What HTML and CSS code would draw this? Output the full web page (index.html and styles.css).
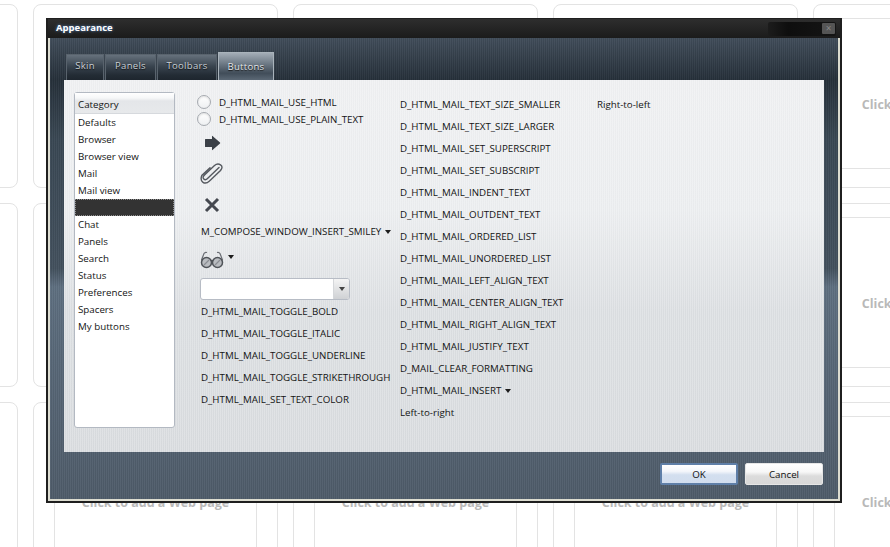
FILE: index.html
```html
<!DOCTYPE html>
<html lang="en">
<head>
<meta charset="utf-8">
<title>Appearance</title>
<link rel="stylesheet" href="styles.css">
</head>
<body>
<div class="dial">
  <div class="tile"><div class="thumb"></div></div>
  <div class="tile"><div class="thumb"><span>Click to add a Web page</span></div></div>
  <div class="tile"><div class="thumb"><span>Click to add a Web page</span></div></div>
  <div class="tile"><div class="thumb"><span>Click to add a Web page</span></div></div>
  <div class="tile"><div class="thumb"><span>Click to add a Web page</span></div></div>
  <div class="tile"><div class="thumb"></div></div>
  <div class="tile"><div class="thumb"><span>Click to add a Web page</span></div></div>
  <div class="tile"><div class="thumb"><span>Click to add a Web page</span></div></div>
  <div class="tile"><div class="thumb"><span>Click to add a Web page</span></div></div>
  <div class="tile"><div class="thumb"><span>Click to add a Web page</span></div></div>
  <div class="tile"><div class="thumb"></div></div>
  <div class="tile"><div class="thumb"><span>Click to add a Web page</span></div></div>
  <div class="tile"><div class="thumb"><span>Click to add a Web page</span></div></div>
  <div class="tile"><div class="thumb"><span>Click to add a Web page</span></div></div>
  <div class="tile"><div class="thumb"><span>Click to add a Web page</span></div></div>
</div>

<div class="dialog">
  <div class="titlebar">
    <span class="title">Appearance</span>
    <div class="winctl"><span class="close">×</span></div>
  </div>
  <div class="body">
    <div class="tabs">
      <div class="tab tab-skin">Skin</div>
      <div class="tab tab-panels">Panels</div>
      <div class="tab tab-toolbars">Toolbars</div>
      <div class="tab tab-buttons">Buttons</div>
    </div>
    <div class="panel">
      <div class="list">
        <div class="list-head">Category</div>
        <div class="item">Defaults</div>
        <div class="item">Browser</div>
        <div class="item">Browser view</div>
        <div class="item">Mail</div>
        <div class="item">Mail view</div>
        <div class="item selected"></div>
        <div class="item">Chat</div>
        <div class="item">Panels</div>
        <div class="item">Search</div>
        <div class="item">Status</div>
        <div class="item">Preferences</div>
        <div class="item">Spacers</div>
        <div class="item">My buttons</div>
      </div>

      <div class="col col-a">
        <div class="radio-row"><span class="radio"></span>D_HTML_MAIL_USE_HTML</div>
        <div class="radio-row"><span class="radio"></span>D_HTML_MAIL_USE_PLAIN_TEXT</div>
        <div class="icon-row icon-arrow">
          <svg width="18" height="16" viewBox="0 0 18 16"><path d="M1 4.500Q1 4 1.500 4H8V1.200Q8 .6 8.500 1L16 7.500Q16.500 8 16 8.500L8.500 15Q8 15.400 8 14.800V12H1.500Q1 12 1 11.500Z" fill="#3b4047"/></svg>
        </div>
        <div class="icon-row icon-clip">
          <svg width="24" height="22" viewBox="0 0 24 22"><path d="M19 4.500 7.500 15.500Q5.500 17.500 3.800 16T4.500 12L14.500 2.500Q17.500 0 20.500 1.800T20.500 7.500L9.500 18Q6 21.300 3 19.300T1.800 12.500L10 4.800" fill="none" stroke="#55595f" stroke-width="1.400" stroke-linecap="round"/></svg>
        </div>
        <div class="icon-row icon-x">
          <svg width="16" height="16" viewBox="0 0 16 16"><path d="M2 2 14 14M14 2 2 14" stroke="#44484f" stroke-width="3"/></svg>
        </div>
        <div class="text-row">M_COMPOSE_WINDOW_INSERT_SMILEY<span class="caret"></span></div>
        <div class="icon-row icon-glasses">
          <svg width="24" height="18" viewBox="0 0 24 18"><path d="M1.500 9 4 2.500Q5 .8 7 1.500M22.500 9 20 2.500Q19 .8 17 1.500" fill="none" stroke="#6a6e74" stroke-width="1.200"/><circle cx="6.500" cy="11.500" r="5" fill="#b9bcc0" stroke="#4f5358" stroke-width="1.500"/><circle cx="17.500" cy="11.500" r="5" fill="#b9bcc0" stroke="#4f5358" stroke-width="1.500"/><path d="M4 14 9 9M15 14 20 9" stroke="#8a8d92" stroke-width="1.200"/><path d="M11 10Q12 9 13 10" fill="none" stroke="#4f5358" stroke-width="1.300"/></svg>
          <span class="caret caret-up"></span>
        </div>
        <div class="select"><span class="select-value"></span><span class="select-btn"><span class="caret caret-flat"></span></span></div>
        <div class="text-row">D_HTML_MAIL_TOGGLE_BOLD</div>
        <div class="text-row">D_HTML_MAIL_TOGGLE_ITALIC</div>
        <div class="text-row">D_HTML_MAIL_TOGGLE_UNDERLINE</div>
        <div class="text-row">D_HTML_MAIL_TOGGLE_STRIKETHROUGH</div>
        <div class="text-row">D_HTML_MAIL_SET_TEXT_COLOR</div>
      </div>

      <div class="col col-b">
        <div class="text-row">D_HTML_MAIL_TEXT_SIZE_SMALLER</div>
        <div class="text-row">D_HTML_MAIL_TEXT_SIZE_LARGER</div>
        <div class="text-row">D_HTML_MAIL_SET_SUPERSCRIPT</div>
        <div class="text-row">D_HTML_MAIL_SET_SUBSCRIPT</div>
        <div class="text-row">D_HTML_MAIL_INDENT_TEXT</div>
        <div class="text-row">D_HTML_MAIL_OUTDENT_TEXT</div>
        <div class="text-row">D_HTML_MAIL_ORDERED_LIST</div>
        <div class="text-row">D_HTML_MAIL_UNORDERED_LIST</div>
        <div class="text-row">D_HTML_MAIL_LEFT_ALIGN_TEXT</div>
        <div class="text-row">D_HTML_MAIL_CENTER_ALIGN_TEXT</div>
        <div class="text-row">D_HTML_MAIL_RIGHT_ALIGN_TEXT</div>
        <div class="text-row">D_HTML_MAIL_JUSTIFY_TEXT</div>
        <div class="text-row">D_MAIL_CLEAR_FORMATTING</div>
        <div class="text-row">D_HTML_MAIL_INSERT<span class="caret"></span></div>
        <div class="text-row">Left-to-right</div>
      </div>

      <div class="col col-c">
        <div class="text-row">Right-to-left</div>
      </div>
    </div>
    <div class="actions">
      <button class="btn btn-ok" type="button">OK</button>
      <button class="btn btn-cancel" type="button">Cancel</button>
    </div>
  </div>
</div>
</body>
</html>
```

FILE: styles.css
```css
* { box-sizing: border-box; }

html, body {
  margin: 0;
  height: 100%;
  overflow: hidden;
  background: #fff;
}

body {
  font-family: "Open Sans", "Liberation Sans", sans-serif;
  font-size: 9.75px;
  color: #141414;
}

/* Speed dial behind the dialog */
.dial {
  display: grid;
  grid-template-columns: repeat(5, 245px);
  grid-auto-rows: 184px;
  gap: 15px;
  margin-left: -227px;
  padding-top: 4px;
  width: 1300px;
}

.tile {
  border: 1px solid #e3e3e3;
  border-radius: 8px;
  padding: 13px 20px 0;
}

.thumb {
  height: 151px;
  border: 1px solid #e3e3e3;
  padding-top: 22px;
  display: flex;
  align-items: center;
  justify-content: center;
}

.thumb span {
  font-size: 12.5px;
  font-weight: 700;
  color: #b9b9b9;
  white-space: nowrap;
}

/* Dialog */
.dialog {
  position: absolute;
  left: 46px;
  top: 18px;
  width: 796px;
  height: 485px;
  display: flex;
  flex-direction: column;
  border: 2px solid #1f1f1f;
  border-top-width: 1px;
  background: #dcdcd0;
  padding: 0 2px 2px;
}

.titlebar {
  flex: none;
  height: 19px;
  margin: 0 -2px;
  padding: 0 4px 2px 8px;
  display: flex;
  align-items: center;
  justify-content: space-between;
  background: linear-gradient(#2e2e2e, #1b1b1b);
}

.title {
  color: #fff;
  font-weight: 700;
  font-size: 9.5px;
  text-shadow: 0 0 3px #5b8fd0;
}

.winctl {
  width: 68px;
  height: 14px;
  margin-top: 2px;
  display: flex;
  justify-content: flex-end;
  background: linear-gradient(90deg, #1c1c1c, #0e0e0e 30%, #151515);
  border-radius: 2px;
}

.close {
  width: 13px;
  height: 11px;
  margin: 1px 1px 0 0;
  border-radius: 1px;
  background: #555;
  color: #888;
  font-size: 10px;
  line-height: 10px;
  text-align: center;
}

.body {
  flex: 1;
  display: flex;
  flex-direction: column;
  min-height: 0;
  padding: 0 14px;
  background:
    repeating-linear-gradient(90deg, rgba(255,255,255,.035) 0 1px, rgba(0,0,0,.05) 1px 2px),
    linear-gradient(#414d5a 0, #26303a 9%, #3a4854 22%, #43515e 50%, #5f7081 54%, #586878 70%, #4f5c6a 100%);
}

/* Tabs */
.tabs {
  flex: none;
  display: flex;
  align-items: flex-end;
  height: 42px;
  padding-left: 2px;
}

.tab {
  height: 26px;
  display: flex;
  align-items: center;
  justify-content: center;
  padding-bottom: 5px;
  color: #c9d0d6;
  font-size: 9.5px;
  letter-spacing: .3px;
  text-shadow: 0 1px 1px #111;
  background: linear-gradient(#66717c 0, #39444f 45%, #232c35 80%, #1e262e);
  border: 1px solid #59636d;
  border-bottom: 0;
  margin-right: 1px;
}

.tab-skin { width: 38px; }
.tab-panels { width: 51px; }
.tab-toolbars { width: 60px; }

.tab-buttons {
  width: 56px;
  height: 28px;
  padding-bottom: 1px;
  color: #e3e7ea;
  background: linear-gradient(#a3adb6 0, #6d7985 40%, #414d59 75%, #5b6875);
  border-color: #a9b3bb;
}

/* Main panel */
.panel {
  flex: none;
  height: 372px;
  display: flex;
  align-items: flex-start;
  padding: 12px 0 0 10px;
  background:
    repeating-linear-gradient(90deg, rgba(255,255,255,.18) 0 1px, rgba(0,0,0,.012) 1px 2px),
    linear-gradient(#eff0f2 0, #eceef0 35%, #dcdfe2 62%, #d9dcdf 100%);
}

.list {
  flex: none;
  width: 101px;
  height: 336px;
  background: #fff;
  border: 1px solid #b3b9c2;
  border-radius: 3px;
}

.list-head {
  height: 21px;
  padding: 5px 3px 0;
  line-height: 14px;
  background: linear-gradient(#fff 0, #f6f7f8 25%, #e4e6e9 40%, #e7e9eb 100%);
  border-bottom: 1px solid #d6d9dd;
}

.item {
  height: 17px;
  line-height: 17px;
  padding-left: 3px;
}

.selected {
  background: #333;
  border: 1px dotted #8d8d8d;
}

.col {
  flex: none;
  display: flex;
  flex-direction: column;
}

.col-a { width: 203px; margin-left: 22px; padding-top: 2px; }
.col-b { width: 197px; padding-top: 2px; }
.col-c { width: 120px; padding-top: 2px; }

.text-row {
  height: 22px;
  line-height: 22px;
  white-space: nowrap;
}

.col-a .text-row { padding-left: 4px; }

.radio-row {
  height: 17px;
  display: flex;
  align-items: center;
  white-space: nowrap;
}

.radio {
  flex: none;
  width: 14px;
  height: 14px;
  margin: -2px 8px 0 0;
  border-radius: 50%;
  border: 1px solid #a6aab0;
  background: linear-gradient(#fff, #eef0f2);
  box-shadow: inset 0 1px 2px rgba(0,0,0,.12);
}

.icon-row {
  display: flex;
  align-items: center;
}

.icon-arrow { height: 31px; padding: 0 0 2px 7px; }
.icon-clip { height: 31px; padding: 0 0 2px 3px; }
.icon-x { height: 32px; padding: 0 0 2px 7px; }
.icon-glasses { height: 36px; padding-left: 3px; }

.col-a .text-row:has(+ .icon-glasses) { height: 20px; line-height: 20px; }

.caret {
  display: inline-block;
  width: 0;
  height: 0;
  margin-left: 4px;
  vertical-align: 1px;
  border: 3px solid transparent;
  border-top: 4px solid #1d1d1d;
  border-bottom: 0;
}

.caret-up { margin: -6px 0 0 4px; }
.caret-flat { margin: 0; border-top-color: #444; vertical-align: middle; }

.select {
  flex: none;
  width: 150px;
  height: 22px;
  margin: 0 0 1px 3px;
  display: flex;
  border: 1px solid #b7bcc5;
  border-radius: 3px;
  background: #fff;
  overflow: hidden;
}

.select-value { flex: 1; }

.select-btn {
  width: 16px;
  display: flex;
  align-items: center;
  justify-content: center;
  border-left: 1px solid #d5d7da;
  background: linear-gradient(#f4f4f4, #cfd1d4);
}

/* Footer */
.actions {
  flex: none;
  display: flex;
  justify-content: flex-end;
  gap: 7px;
  padding: 11px 1px 0 0;
}

.btn {
  width: 78px;
  height: 22px;
  padding: 0;
  font-family: inherit;
  font-size: 9.75px;
  color: #111;
  border-radius: 2px;
}

.btn-ok {
  border: 2px solid #5f7fa8;
  background: linear-gradient(#fff 0, #f4f6fb 35%, #d3dfef 55%, #d1ddee 100%);
}

.btn-cancel {
  border: 1px solid #e6e6e6;
  background: linear-gradient(#fff 0, #f7f7f7 40%, #dcdcdc 60%, #d8d8d8 100%);
}
```
